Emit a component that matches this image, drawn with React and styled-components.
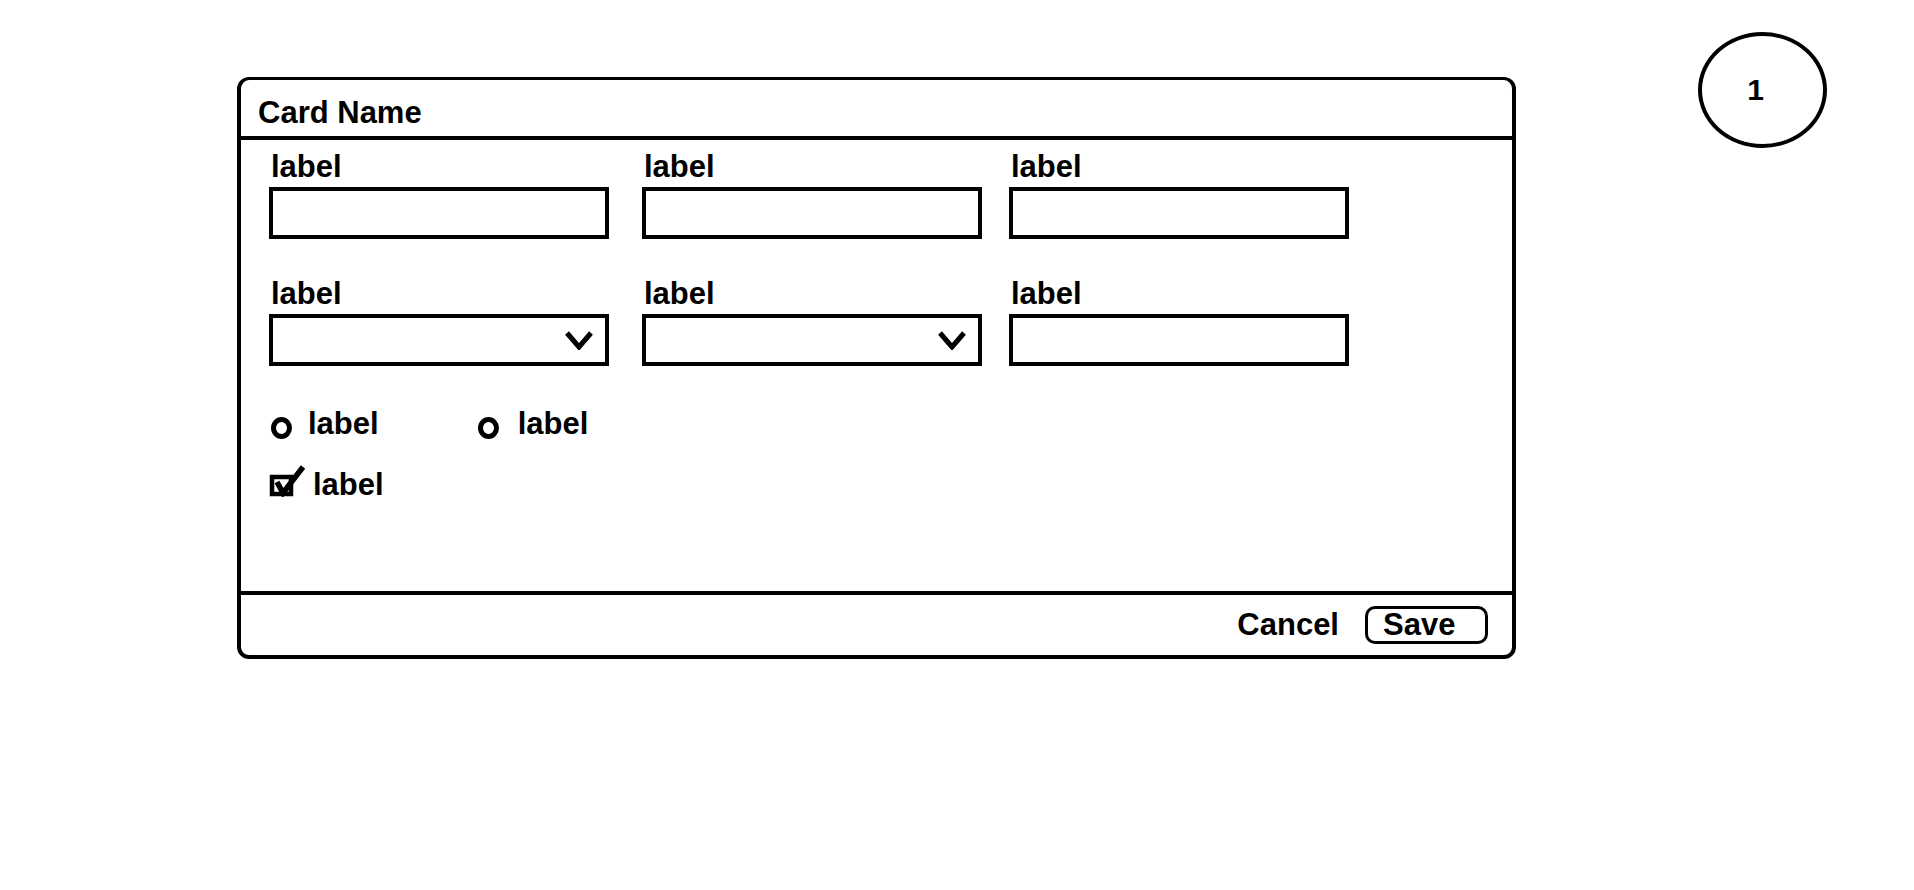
import React from "react";
import styled, { createGlobalStyle } from "styled-components";

const GlobalStyle = createGlobalStyle`
  body {
    margin: 0;
    background: #ffffff;
    font-family: "Liberation Sans", Arial, sans-serif;
    color: #000000;
  }
`;

const Page = styled.div`
  display: flex;
  align-items: flex-start;
  padding: 32px 0 0 237px;
  min-height: 890px;
  box-sizing: border-box;
`;

const Card = styled.div`
  display: flex;
  flex-direction: column;
  width: 1279px;
  height: 582px;
  margin-top: 45px;
  border: 4px solid #000;
  border-top-width: 3px;
  border-radius: 12px;
  box-sizing: border-box;
`;

const CardHeader = styled.div`
  height: 60px;
  box-sizing: border-box;
  padding: 18px 0 0 17px;
  border-bottom: 4px solid #000;
  font-size: 31px;
  line-height: 30px;
  font-weight: bold;
`;

const CardBody = styled.div`
  flex: 1;
  padding: 12px 0 0 28px;
`;

const FieldGrid = styled.div`
  display: grid;
  grid-template-columns: 373px 367px 340px;
  row-gap: 40px;
`;

const Field = styled.div`
  display: flex;
  flex-direction: column;
  width: 340px;
`;

const Label = styled.span`
  font-size: 31px;
  line-height: 30px;
  font-weight: bold;
  padding-left: ${(props) => props.indent || 0}px;
`;

const InputBox = styled.div`
  display: flex;
  align-items: center;
  justify-content: flex-end;
  height: 52px;
  margin-top: 5px;
  padding-right: 12px;
  border: 4px solid #000;
  box-sizing: border-box;
`;

const OptionRow = styled.div`
  display: flex;
  align-items: center;
  gap: ${(props) => props.gap || 0}px;
  margin-top: ${(props) => props.top || 0}px;
  padding-left: ${(props) => props.indent || 0}px;
`;

const RadioItem = styled.div`
  display: flex;
  align-items: center;
  gap: ${(props) => props.gap || 16}px;
`;

const RadioCircle = styled.span`
  width: 21px;
  height: 22px;
  margin-top: 8px;
  border: 5px solid #000;
  border-radius: 50%;
  box-sizing: border-box;
`;

const CheckIcon = styled.svg`
  margin-bottom: 8px;
`;

const CardFooter = styled.div`
  display: flex;
  align-items: center;
  justify-content: flex-end;
  gap: 26px;
  height: 64px;
  box-sizing: border-box;
  padding-right: 24px;
  border-top: 4px solid #000;
`;

const TextButton = styled.span`
  font-size: 31px;
  line-height: 30px;
  font-weight: bold;
`;

const SaveButton = styled.span`
  display: flex;
  align-items: center;
  width: 123px;
  height: 38px;
  padding-left: 15px;
  border: 3px solid #000;
  border-radius: 10px;
  box-sizing: border-box;
  font-size: 31px;
  font-weight: bold;
`;

const Marker = styled.div`
  display: flex;
  align-items: center;
  justify-content: center;
  width: 129px;
  height: 116px;
  margin-left: 182px;
  padding-right: 14px;
  border: 4px solid #000;
  border-radius: 50%;
  box-sizing: border-box;
  font-size: 30px;
  font-weight: bold;
`;

const Chevron = () => (
  <svg width="28" height="20" viewBox="0 0 28 20">
    <polyline points="2,3 14,17 26,3" fill="none" stroke="#000" strokeWidth="5" />
  </svg>
);

const fields = [
  { select: false },
  { select: false },
  { select: false },
  { select: true },
  { select: true },
  { select: false },
];

const App = () => {
  return (
    <Page>
      <GlobalStyle />
      <Card>
        <CardHeader>Card Name</CardHeader>
        <CardBody>
          <FieldGrid>
            {fields.map((f, i) => (
              <Field key={i}>
                <Label indent={2}>label</Label>
                <InputBox>{f.select && <Chevron />}</InputBox>
              </Field>
            ))}
          </FieldGrid>
          <OptionRow top={43} gap={99} indent={2}>
            <RadioItem gap={16}>
              <RadioCircle />
              <Label>label</Label>
            </RadioItem>
            <RadioItem gap={19}>
              <RadioCircle />
              <Label>label</Label>
            </RadioItem>
          </OptionRow>
          <OptionRow top={26} gap={8}>
            <CheckIcon width="36" height="32" viewBox="0 0 36 32">
              <rect x="3" y="12" width="19" height="17" fill="none" stroke="#000" strokeWidth="4.5" />
              <polyline points="8,17 14,28 34,2" fill="none" stroke="#000" strokeWidth="5.5" />
            </CheckIcon>
            <Label>label</Label>
          </OptionRow>
        </CardBody>
        <CardFooter>
          <TextButton>Cancel</TextButton>
          <SaveButton>Save</SaveButton>
        </CardFooter>
      </Card>
      <Marker>1</Marker>
    </Page>
  );
};

export default App;
